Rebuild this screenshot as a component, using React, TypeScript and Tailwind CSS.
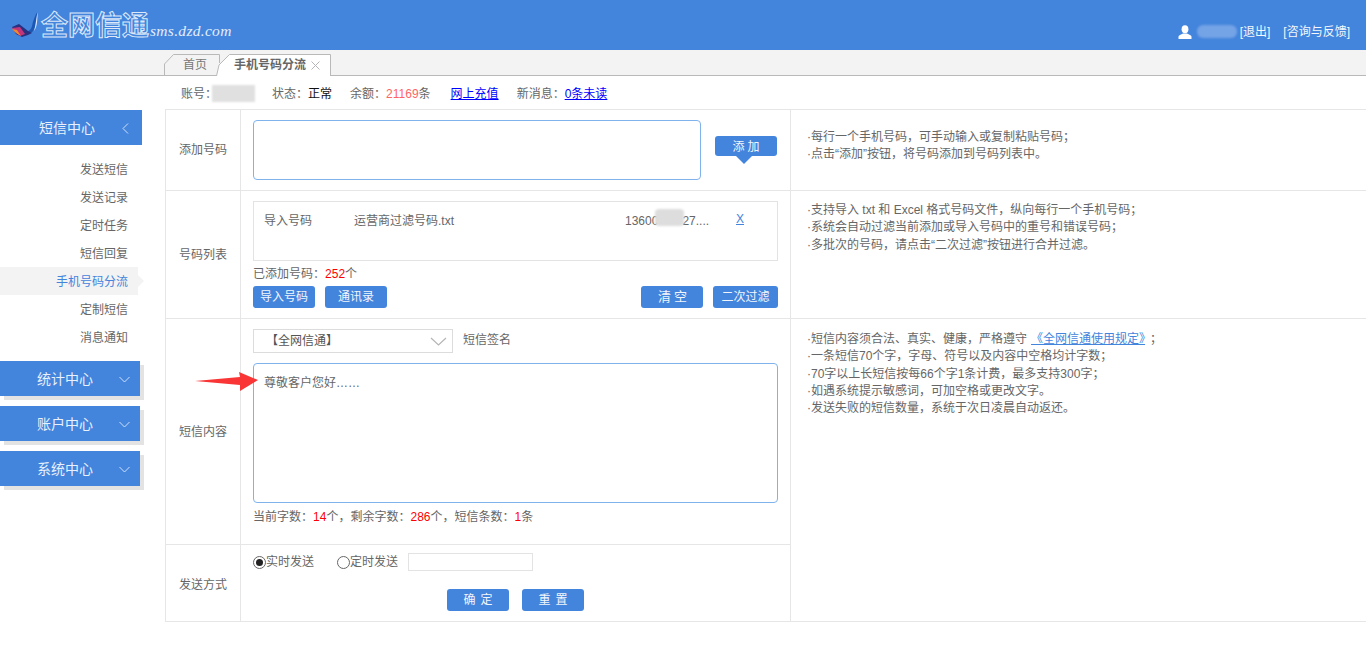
import React from "react";

const COMMA = "\uFF0C";
const COLON = "\uFF1A";
const SEMI = "\uFF1B";

function SideHead({ label, open }: { label: string; open?: boolean }) {
  if (open) {
    return (
      <div className="flex h-[35px] w-[142px] items-center bg-[#4384dc] pt-[1px] text-[14px] text-[#e8f0fb]">
        <span className="ml-[39px]">{label}</span>
        <svg className="ml-[27px]" width="7" height="11" viewBox="0 0 7 11" fill="none" stroke="#cfe0f6" strokeWidth="1">
          <path d="M6 0.5 L1 5.5 L6 10.5" />
        </svg>
      </div>
    );
  }
  return (
    <div className="flex h-[35px] w-[140px] items-center bg-[#4384dc] pt-[1px] text-[14px] text-[#e8f0fb] shadow-[4px_4px_0_#e3e3e3]">
      <span className="ml-[37px]">{label}</span>
      <svg className="ml-[26px]" width="11" height="7" viewBox="0 0 11 7" fill="none" stroke="#cfe0f6" strokeWidth="1">
        <path d="M0.5 1 L5.5 6 L10.5 1" />
      </svg>
    </div>
  );
}

function SubItem({ label, active }: { label: string; active?: boolean }) {
  return (
    <div
      className={
        active
          ? "relative flex h-[28px] w-[138px] items-center justify-end bg-[#f3f3f3] pr-[10px] pt-[1px] text-[#4384dc]"
          : "flex h-[28px] w-[138px] items-center justify-end pr-[10px] pt-[1px] text-[#666]"
      }
    >
      {label}
      {active && (
        <span className="absolute left-[138px] top-[8px] h-0 w-0 border-y-[6px] border-l-[6px] border-y-transparent border-l-[#f3f3f3]" />
      )}
    </div>
  );
}

function Btn({ w, label, cls }: { w: string; label: string; cls?: string }) {
  return (
    <div className={`flex h-[22px] items-center justify-center rounded-[3px] bg-[#4384dc] text-[#f2f6fc] ${w} ${cls ?? ""}`}>
      {label}
    </div>
  );
}

function Label({ text, cls }: { text: string; cls?: string }) {
  return (
    <div className={`flex w-[75px] shrink-0 items-center justify-center border-r border-[#e6e6e6] text-[#666] ${cls ?? ""}`}>{text}</div>
  );
}

function Tips({ lines }: { lines: React.ReactNode[] }) {
  return (
    <div className="ml-[16px] leading-[17.25px] text-[#666]">
      {lines.map((l, i) => (
        <div key={i} className="whitespace-nowrap">
          ·{l}
        </div>
      ))}
    </div>
  );
}

export default function App() {
  return (
    <div className="relative h-[651px] w-[1366px] overflow-hidden bg-white text-[12px] text-[#666] [font-family:'Liberation_Sans','Noto_Sans_CJK_SC',sans-serif]">
      {/* header */}
      <header className="flex h-[50px] items-center bg-[#4384dc] pr-[16px] text-[#f4f8fd]">
        <svg className="ml-[11px] mt-[-2px] shrink-0" width="29" height="30" viewBox="0 0 29 30" fill="none">
          <path d="M27 2 C25 9 26 17 22 22 C20 25 16 25 13 23 C17 23 20 21 21 17 C22 12 24 6 27 2 Z" fill="#1c57b4" />
          <path d="M27 2 C26 9 27 17 23 22 C25 16 25 8 27 2 Z" fill="#dfeafa" />
          <path d="M1 18 L8 15 L17 22 L21 24 L17 26 L11 28 L5 25 Z" fill="#28307f" />
          <path d="M1 19 L9 18 L14 25 L9 27 L4 23 Z" fill="#c2357a" />
          <path d="M1 20 L6 21 L10 27 L5 24 Z" fill="#ef8a2e" />
        </svg>
        <span className="ml-[1px] mt-[2px] w-[110px] whitespace-nowrap text-[27px] font-bold leading-none text-[#4384dc] [-webkit-text-stroke:1px_#dce8f9]">
          全网信通
        </span>
        <span className="ml-[-1px] mt-[11px] whitespace-nowrap text-[15.5px] italic tracking-[0.3px] text-[#e4eefb] [font-family:'Liberation_Serif',serif]">
          sms.dzd.com
        </span>
        <div className="mt-[13px] ml-auto flex items-center">
          <svg width="14" height="14" viewBox="0 0 14 14" fill="#ffffff">
            <ellipse cx="7" cy="4.2" rx="3.4" ry="4" />
            <path d="M0.5 14 V11.6 C0.5 10.4 3 9.6 5 8.6 H9 C11 9.6 13.5 10.4 13.5 11.6 V14 Z" />
          </svg>
          <div className="ml-[5px] h-[13px] w-[40px] rounded-[6px] bg-[#74a3e6] blur-[1px]" />
          <span className="ml-[3px]">[退出]</span>
          <span className="ml-[13px]">[咨询与反馈]</span>
        </div>
      </header>

      {/* tabs */}
      <div className="flex h-[26px] items-end border-b border-[#b9b9b9] bg-[#f3f3f3] pl-[164px]">
        <div className="relative flex h-[21px] w-[54px] items-center justify-end pr-[11px] text-[#777]">
          <svg className="absolute left-0 top-0" width="56" height="21" fill="none" stroke="#b9b9b9">
            <path d="M0.5 21 V10 L9.5 0.5 H55.5 V9" />
          </svg>
          <span className="relative">首页</span>
        </div>
        <div className="relative ml-[-2px] flex h-[22px] w-[115px] translate-y-[1px] items-center pl-[18px] font-bold text-[#666]">
          <svg className="absolute left-0 top-0" width="115" height="22" fill="#ffffff" stroke="#b9b9b9">
            <path d="M0.5 22 L3 11 L13.5 0.5 H114.5 V22" />
          </svg>
          <span className="relative whitespace-nowrap">手机号码分流</span>
          <svg className="relative ml-[5px]" width="9" height="9" viewBox="0 0 9 9" stroke="#b5b5b5" strokeWidth="1">
            <path d="M0.5 0.5 L8.5 8.5 M8.5 0.5 L0.5 8.5" />
          </svg>
        </div>
      </div>

      <div className="flex">
        {/* sidebar */}
        <aside className="w-[165px] shrink-0 pt-[34px]">
          <SideHead label="短信中心" open />
          <div className="mt-[10px]">
            <SubItem label="发送短信" />
            <SubItem label="发送记录" />
            <SubItem label="定时任务" />
            <SubItem label="短信回复" />
            <SubItem label="手机号码分流" active />
            <SubItem label="定制短信" />
            <SubItem label="消息通知" />
          </div>
          <div className="mt-[10px] flex flex-col gap-[10px]">
            <SideHead label="统计中心" />
            <SideHead label="账户中心" />
            <SideHead label="系统中心" />
          </div>
        </aside>

        {/* main */}
        <main className="min-w-0 flex-1">
          <div className="relative flex h-[33px] items-center pl-[16px] pt-[2px] whitespace-nowrap">
            <span>账号{COLON}</span>
            <div className="ml-[-5px] h-[17px] w-[43px] bg-[#e0e0e0] blur-[1px]" />
            <span className="ml-[17px]">状态{COLON}</span>
            <span className="text-[#111]">正常</span>
            <span className="ml-[18px]">余额{COLON}</span>
            <span className="text-[#ff6464]">21169</span>
            <span>条</span>
            <span className="ml-[20px] text-[#0000ff] underline">网上充值</span>
            <span className="ml-[18px]">新消息{COLON}</span>
            <span className="text-[#0000ff] underline">0条未读</span>
          </div>

          <div className="border-y border-l border-[#e6e6e6]">
            {/* row 1 */}
            <div className="flex h-[81px] border-b border-[#e6e6e6]">
              <Label text="添加号码" />
              <div className="flex w-[550px] shrink-0 items-center border-r border-[#e6e6e6] pl-[12px]">
                <div className="h-[60px] w-[448px] rounded-[4px] border border-[#80b2ec]" />
                <div className="relative ml-[14px] mt-[-8px] flex h-[20px] w-[62px] items-center justify-center rounded-[3px] bg-[#4384dc] pl-[3px] pt-[1px] tracking-[3px] text-[#f2f6fc]">
                  添加
                  <span className="absolute left-[21px] top-[20px] h-0 w-0 border-x-[8px] border-t-[8px] border-x-transparent border-t-[#4384dc]" />
                </div>
              </div>
              <div className="pt-[19px]">
                <Tips lines={[`每行一个手机号码${COMMA}可手动输入或复制粘贴号码${SEMI}`, `点击“添加”按钮${COMMA}将号码添加到号码列表中。`]} />
              </div>
            </div>

            {/* row 2 */}
            <div className="flex h-[128px] border-b border-[#e6e6e6]">
              <Label text="号码列表" />
              <div className="w-[550px] shrink-0 border-r border-[#e6e6e6] pl-[12px] pr-[12px] pt-[10px]">
                <div className="flex h-[60px] w-[525px] items-start border border-[#e3e3e3] pl-[10px] pt-[10px]">
                  <span className="w-[90px]">导入号码</span>
                  <span className="w-[271px]">运营商过滤号码.txt</span>
                  <span className="relative w-[111px] whitespace-nowrap">
                    13600<span className="absolute left-[30px] top-[-3px] h-[17px] w-[29px] rounded-[4px] bg-[#dddddd] blur-[1px]" />
                    <span className="ml-[24px]">27....</span>
                  </span>
                  <span className="mt-[-2px] text-[#4384dc] underline">X</span>
                </div>
                <div className="mt-[6px] leading-[14px]">
                  已添加号码{COLON}<span className="text-[#ff0000]">252</span>个
                </div>
                <div className="mt-[5px] flex">
                  <Btn w="w-[62px]" label="导入号码" />
                  <Btn w="w-[62px]" cls="ml-[10px]" label="通讯录" />
                  <Btn w="w-[62px]" cls="ml-auto pl-[4px] tracking-[3px] text-[13px]" label="清空" />
                  <Btn w="w-[65px]" cls="ml-[10px]" label="二次过滤" />
                </div>
              </div>
              <div className="pt-[11px]">
                <Tips
                  lines={[
                    `支持导入 txt 和 Excel 格式号码文件${COMMA}纵向每行一个手机号码${SEMI}`,
                    `系统会自动过滤当前添加或导入号码中的重号和错误号码${SEMI}`,
                    `多批次的号码${COMMA}请点击“二次过滤”按钮进行合并过滤。`,
                  ]}
                />
              </div>
            </div>

            {/* row 3 + row 4 share the right column */}
            <div className="flex">
              <div className="w-[625px] shrink-0 border-r border-[#e6e6e6]">
                <div className="flex h-[226px] border-b border-[#e6e6e6]">
                  <Label text="短信内容" />
                  <div className="flex-1 pl-[12px] pt-[10px]">
                    <div className="flex items-center">
                      <div className="flex h-[24px] w-[200px] items-center justify-between border border-[#dcdcdc] pl-[12px] pr-[5px] text-[#555]">
                        【全网信通】
                        <svg width="17" height="9" viewBox="0 0 17 9" fill="none" stroke="#b5b5b5" strokeWidth="1.2">
                          <path d="M1 1 L8.5 8 L16 1" />
                        </svg>
                      </div>
                      <span className="ml-[10px] mt-[-2px]">短信签名</span>
                    </div>
                    <div className="mt-[10px] h-[140px] w-[525px] rounded-[4px] border border-[#80b2ec] pl-[10px] pt-[12px] leading-[14px]">
                      尊敬客户您好……
                    </div>
                    <div className="mt-[7px] leading-[14px]">
                      当前字数{COLON}<span className="text-[#ff0000]">14</span>个{COMMA}剩余字数{COLON}<span className="text-[#ff0000]">286</span>个{COMMA}短信条数{COLON}<span className="text-[#ff0000]">1</span>条
                    </div>
                  </div>
                </div>
                <div className="flex h-[76px]">
                  <Label text="发送方式" cls="pt-[3px]" />
                  <div className="flex-1 pl-[12px] pt-[8px]">
                    <div className="flex h-[18px] items-center">
                      <span className="flex h-[13px] w-[13px] items-center justify-center rounded-full border border-[#666]">
                        <span className="h-[7px] w-[7px] rounded-full bg-[#222]" />
                      </span>
                      <span>实时发送</span>
                      <span className="ml-[23px] h-[13px] w-[13px] rounded-full border border-[#666]" />
                      <span>定时发送</span>
                      <div className="ml-[10px] h-[18px] w-[125px] border border-[#e3e3e3]" />
                    </div>
                    <div className="mt-[18px] ml-[194px] flex gap-[13px]">
                      <Btn w="w-[62px]" cls="pl-[5px] tracking-[5px]" label="确定" />
                      <Btn w="w-[62px]" cls="pl-[5px] tracking-[5px]" label="重置" />
                    </div>
                  </div>
                </div>
              </div>
              <div className="flex-1 pt-[12px]">
                <Tips
                  lines={[
                    <>
                      短信内容须合法、真实、健康{COMMA}严格遵守
                      <span className="ml-[4px] text-[#4384dc] underline">《全网信通使用规定》</span>
                      <span className="ml-[5px]">{SEMI}</span>
                    </>,
                    `一条短信70个字${COMMA}字母、符号以及内容中空格均计字数${SEMI}`,
                    `70字以上长短信按每66个字1条计费${COMMA}最多支持300字${SEMI}`,
                    `如遇系统提示敏感词${COMMA}可加空格或更改文字。`,
                    `发送失败的短信数量${COMMA}系统于次日凌晨自动返还。`,
                  ]}
                />
              </div>
            </div>
          </div>
        </main>
      </div>

      {/* annotation arrow */}
      <svg className="absolute left-[195px] top-[371px]" width="64" height="21" viewBox="0 0 64 21">
        <path d="M0 10 L45 6 L44 1 L63 9 L45 20 L45 14 Z" fill="#f93535" />
      </svg>
    </div>
  );
}
